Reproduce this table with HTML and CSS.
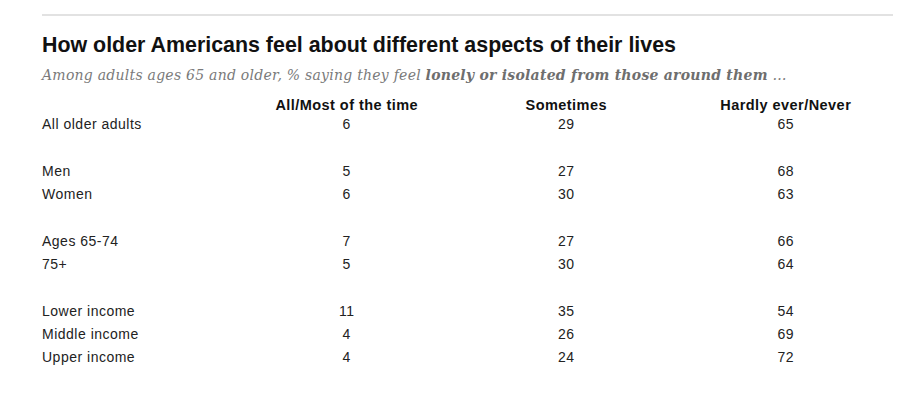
FILE: index.html
```html
<!DOCTYPE html>
<html lang="en">
<head>
<meta charset="utf-8">
<title>How older Americans feel</title>
<link rel="stylesheet" href="styles.css">
</head>
<body>
<div class="chart">
  <div class="rule"></div>
  <h1 class="title">How older Americans feel about different aspects of their lives</h1>
  <p class="subtitle">Among adults ages 65 and older, % saying they feel <b>lonely or isolated from those around them</b> …</p>
  <div class="table">
    <div class="row head">
      <span class="label"></span>
      <span class="cell">All/Most of the time</span>
      <span class="cell">Sometimes</span>
      <span class="cell">Hardly ever/Never</span>
    </div>
    <div class="group">
      <div class="row"><span class="label">All older adults</span><span class="cell">6</span><span class="cell">29</span><span class="cell">65</span></div>
    </div>
    <div class="group">
      <div class="row"><span class="label">Men</span><span class="cell">5</span><span class="cell">27</span><span class="cell">68</span></div>
      <div class="row"><span class="label">Women</span><span class="cell">6</span><span class="cell">30</span><span class="cell">63</span></div>
    </div>
    <div class="group">
      <div class="row"><span class="label">Ages 65-74</span><span class="cell">7</span><span class="cell">27</span><span class="cell">66</span></div>
      <div class="row"><span class="label">75+</span><span class="cell">5</span><span class="cell">30</span><span class="cell">64</span></div>
    </div>
    <div class="group">
      <div class="row"><span class="label">Lower income</span><span class="cell">11</span><span class="cell">35</span><span class="cell">54</span></div>
      <div class="row"><span class="label">Middle income</span><span class="cell">4</span><span class="cell">26</span><span class="cell">69</span></div>
      <div class="row"><span class="label">Upper income</span><span class="cell">4</span><span class="cell">24</span><span class="cell">72</span></div>
    </div>
  </div>
</div>
</body>
</html>
```

FILE: styles.css
```css
html, body {
  margin: 0;
  padding: 0;
  background: #ffffff;
}

.chart {
  width: 851px;
  padding: 14px 0 0 42px;
  font-family: "Liberation Sans", Arial, sans-serif;
  color: #222;
}

.rule {
  height: 2px;
  background: #e2e2e2;
}

.title {
  margin: 15.5px 0 0 0;
  font-size: 21.4px;
  line-height: 26px;
  font-weight: bold;
  color: #111;
}

.subtitle {
  margin: 7.5px 0 0 0;
  font-family: "DejaVu Serif", Georgia, serif;
  font-style: italic;
  font-size: 14px;
  line-height: 20px;
  letter-spacing: 0.25px;
  color: #7a7a7a;
}

.subtitle b {
  font-weight: bold;
  color: #6e6e6e;
}

.table {
  margin-top: 10px;
}

.row {
  display: grid;
  grid-template-columns: 195px repeat(3, 219.5px);
  height: 23px;
  line-height: 23px;
  font-size: 14px;
  letter-spacing: 0.5px;
}

.row.head {
  height: 18px;
  line-height: 20px;
  font-weight: bold;
  color: #111;
  letter-spacing: 0.45px;
}

.head .cell {
  font-size: 14.5px;
}

.cell {
  text-align: center;
}

.group + .group {
  margin-top: 24px;
}
```
